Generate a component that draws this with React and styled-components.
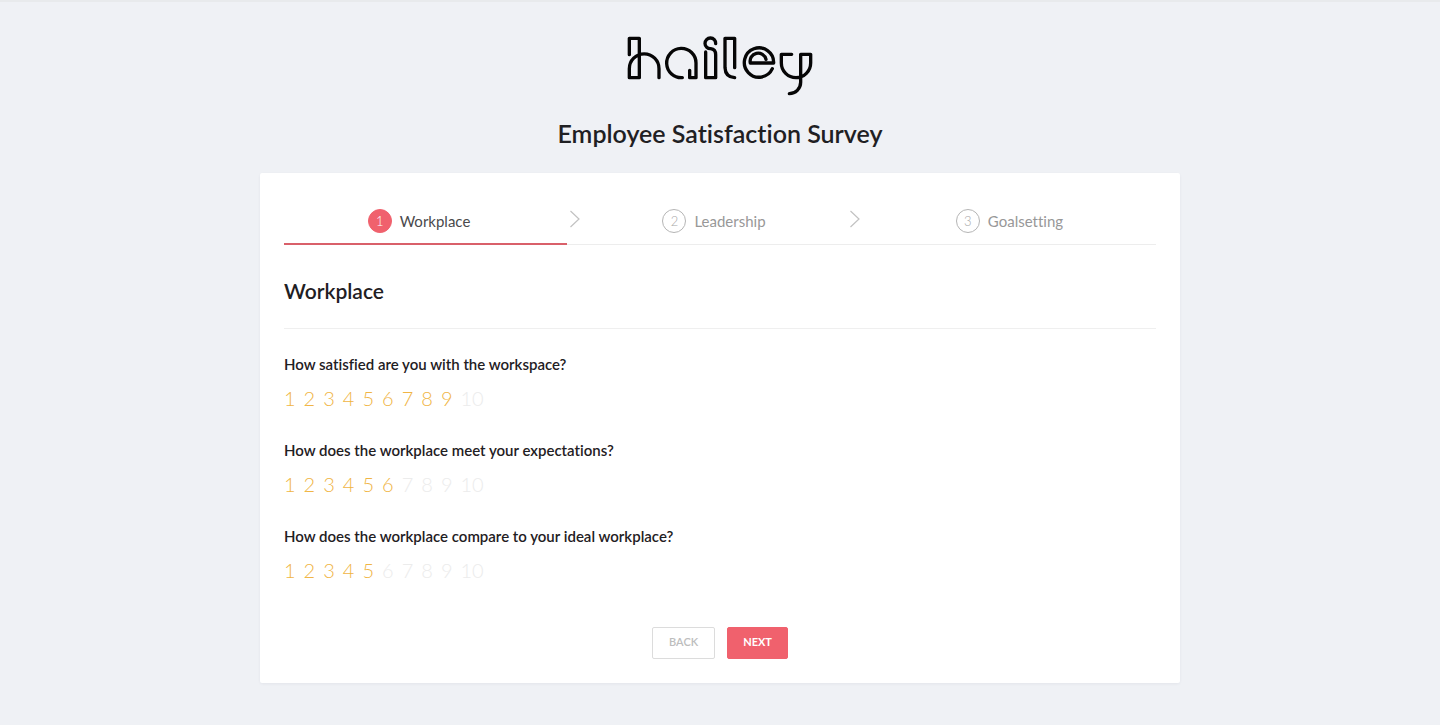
import React, { useState } from "react";
import styled, { createGlobalStyle } from "styled-components";

const GlobalStyle = createGlobalStyle`
  * {
    box-sizing: border-box;
  }

  body {
    margin: 0;
    background-color: #eff1f5;
    color: #1f2023;
    font-family: Lato, "Open Sans", sans-serif;
    font-size: 15px;
    font-variant-ligatures: none;
  }
`;

const Page = styled.div`
  min-height: 100vh;
  display: flex;
  flex-flow: column nowrap;
  align-items: center;
  padding: 26px 24px 40px;
  border-top: 2px solid #e8eaec;
`;

const LogoSvg = styled.svg`
  width: 200px;
  height: 72px;
  fill: none;
  stroke: #060606;
  stroke-width: 10;
  stroke-linecap: round;
  stroke-linejoin: round;
`;

const Title = styled.h1`
  margin: 16px 0 21px;
  padding-bottom: 2px;
  font-size: 25px;
  line-height: 34px;
  font-weight: 600;
`;

const Card = styled.main`
  width: 100%;
  max-width: 920px;
  padding: 24px;
  background-color: #fff;
  border-radius: 2px;
  box-shadow: 0 1px 3px rgba(30, 40, 60, 0.06);
`;

const StepList = styled.ol`
  list-style: none;
  margin: 0;
  padding: 12px 15px 10px 0;
  display: grid;
  grid-template-columns: 270fr 42fr 236fr 46fr 263fr;
  align-items: center;
`;

const Step = styled.li`
  display: flex;
  justify-content: center;
  align-items: center;
  gap: 8px;
  line-height: 24px;
  color: ${({ active }) => (active ? "#4a4a4c" : "#989898")};
`;

const StepNumber = styled.span`
  width: 24px;
  height: 24px;
  border: 1px solid ${({ active }) => (active ? "#f0616d" : "#b5b5b5")};
  border-radius: 50%;
  background-color: ${({ active }) => (active ? "#f0616d" : "#fff")};
  color: ${({ active }) => (active ? "#fff" : "#a8a8a8")};
  font-size: 13px;
  line-height: 22px;
  font-weight: 300;
  text-align: center;
`;

const ArrowItem = styled.li`
  display: flex;
  justify-content: center;
  padding-bottom: 4px;

  svg {
    width: 12px;
    height: 20px;
    fill: none;
    stroke: #c2c2c2;
    stroke-width: 1.2;
  }
`;

const Track = styled.div`
  height: 2px;
  border-bottom: 1px solid #ededed;
`;

const Progress = styled.div`
  width: ${({ step }) => step * 32.5}%;
  height: 2px;
  background-color: #d9606a;
`;

const SectionTitle = styled.h2`
  margin: 0;
  padding: 32px 0 23px;
  border-bottom: 1px solid #efefef;
  font-size: 21px;
  line-height: 28px;
  font-weight: 600;
`;

const Question = styled.fieldset`
  min-width: 0;
  margin: 0;
  padding: 23px 0 0;
  border: 0;

  legend {
    float: left;
    width: 100%;
    padding: 0;
    font-size: 15px;
    line-height: 24px;
    font-weight: 600;
  }
`;

const Scale = styled.div`
  clear: both;
  display: flex;
  gap: 8px;
  padding: 7px 0 2px;
`;

const Mark = styled.label`
  font-size: 20px;
  line-height: 30px;
  font-weight: 300;
  color: ${({ on }) => (on ? "#f0b545" : "#ececec")};
  cursor: pointer;

  input {
    appearance: none;
    float: left;
    width: 0;
    height: 0;
    margin: 0;
  }
`;

const Actions = styled.div`
  display: flex;
  justify-content: center;
  gap: 12px;
  padding-top: 40px;
`;

const Button = styled.button`
  height: 32px;
  padding: 0 ${({ primary }) => (primary ? 15 : 16)}px 3px;
  border: 1px solid ${({ primary }) => (primary ? "#f0616d" : "#dcdcdc")};
  border-radius: 2px;
  background-color: ${({ primary }) => (primary ? "#f0616d" : "#fff")};
  color: ${({ primary }) => (primary ? "#fff" : "#bdbdbd")};
  font-family: inherit;
  font-size: 11px;
  font-weight: ${({ primary }) => (primary ? 700 : 600)};
  cursor: pointer;
`;

const steps = ["Workplace", "Leadership", "Goalsetting"];

const questions = [
  { id: "workspace", text: "How satisfied are you with the workspace?", value: 9 },
  { id: "expectations", text: "How does the workplace meet your expectations?", value: 6 },
  { id: "ideal", text: "How does the workplace compare to your ideal workplace?", value: 5 },
];

const marks = [1, 2, 3, 4, 5, 6, 7, 8, 9, 10];

const Logo = () => (
  <LogoSvg viewBox="0 0 600 216" role="img" aria-label="hailey">
    <path d="M28 80V31H58V149H28V122A44 44 0 0 1 117 122V149" />
    <path d="M187 149A44 44 0 1 1 228 105V149H209V127" />
    <path d="M287 47A16 16 0 1 0 272 62Q287 64 287 80V149H257V72" />
    <path d="M344 119V31H315V119Q316 147 344 149" />
    <path d="M391 105H461A44 44 0 1 0 457 122M391 105A24 24 0 0 1 438 94" />
    <path d="M515 79H484V105A44 44 0 0 0 572 105V79H542V163A34 34 0 0 1 508 197" />
  </LogoSvg>
);

const Arrow = () => (
  <ArrowItem aria-hidden="true">
    <svg viewBox="0 0 12 20">
      <path d="M1.5 2L10 10L1.5 18" />
    </svg>
  </ArrowItem>
);

const Rating = ({ id, text, value }) => {
  const [score, setScore] = useState(value);

  return (
    <Question>
      <legend>{text}</legend>
      <Scale>
        {marks.map((mark) => (
          <Mark key={mark} on={mark <= score ? 1 : undefined}>
            <input
              type="radio"
              name={id}
              value={mark}
              checked={mark === score}
              onChange={() => setScore(mark)}
            />
            {mark}
          </Mark>
        ))}
      </Scale>
    </Question>
  );
};

const App = () => {
  return (
    <>
      <GlobalStyle />
      <Page>
        <Logo />
        <Title>Employee Satisfaction Survey</Title>
        <Card>
          <StepList>
            {steps.map((name, i) => (
              <React.Fragment key={name}>
                {i > 0 && <Arrow />}
                <Step active={i === 0 ? 1 : undefined}>
                  <StepNumber active={i === 0 ? 1 : undefined}>{i + 1}</StepNumber>
                  {name}
                </Step>
              </React.Fragment>
            ))}
          </StepList>
          <Track>
            <Progress step={1} />
          </Track>
          <SectionTitle>Workplace</SectionTitle>
          {questions.map((q) => (
            <Rating key={q.id} {...q} />
          ))}
          <Actions>
            <Button type="button">BACK</Button>
            <Button type="button" primary={1}>NEXT</Button>
          </Actions>
        </Card>
      </Page>
    </>
  );
};

export default App;
